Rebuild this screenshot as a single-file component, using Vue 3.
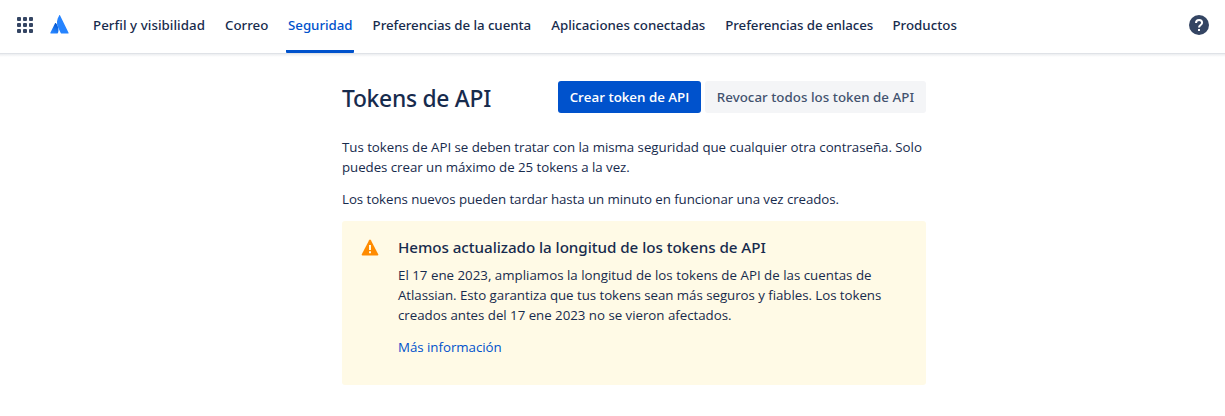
<script setup>
const tabs = ['Perfil y visibilidad', 'Correo', 'Seguridad', 'Preferencias de la cuenta', 'Aplicaciones conectadas', 'Preferencias de enlaces', 'Productos']
const active = 'Seguridad'
</script>

<template>
  <div class="page">
    <header class="topbar">
      <svg class="apps" width="16" height="16" viewBox="0 0 16 16" fill="#344563">
        <template v-for="r in 3" :key="r">
          <rect v-for="c in 3" :key="c" :x="(c - 1) * 6" :y="(r - 1) * 6" width="4" height="4" rx="1" />
        </template>
      </svg>
      <svg class="logo" width="19" height="19" viewBox="0 0 19 19">
        <defs>
          <linearGradient id="leg" x1="8" y1="9" x2="3" y2="18" gradientUnits="userSpaceOnUse">
            <stop offset="0" stop-color="#0052cc" />
            <stop offset="0.92" stop-color="#2684ff" />
          </linearGradient>
        </defs>
        <path d="M6 8.2c-.3-.35-.75-.3-.95.1L.35 17.7c-.15.4.05.7.5.7h6.5c.2 0 .5-.1.6-.35 1.3-2.8.4-7.3-1.95-9.85z" fill="url(#leg)" />
        <path d="M9.2.4C6.6 4.4 6.4 8.6 7.9 12l2.8 6.05c.1.2.3.35.5.35h6.9c.45 0 .65-.35.45-.75L10.1.4c-.2-.4-.65-.4-.9 0z" fill="#2684ff" />
      </svg>
      <nav class="tabs">
        <a v-for="t in tabs" :key="t" class="tab" :class="{ active: t === active }">{{ t }}</a>
      </nav>
      <svg class="help" width="20" height="20" viewBox="0 0 20 20">
        <circle cx="10" cy="10" r="10" fill="#344563" />
        <path d="M7 7.9C7 6.1 8.3 5 10.1 5S13.1 6.2 13.1 7.8c0 2.2-3.1 2.2-3.1 4.7" fill="none" stroke="#fff" stroke-width="2" />
        <path d="M9 14h2v2H9z" fill="#fff" />
      </svg>
    </header>
    <div class="topshade"></div>

    <main class="content">
      <div class="head">
        <h1>Tokens de API</h1>
        <div class="actions">
          <button class="btn primary">Crear token de API</button>
          <button class="btn">Revocar todos los token de API</button>
        </div>
      </div>
      <p class="intro">
        <span class="i1">Tus tokens de API se deben tratar con la misma seguridad que cualquier otra contraseña. Solo</span>
        <span class="i2">puedes crear un máximo de 25 tokens a la vez.</span>
      </p>
      <p class="note">Los tokens nuevos pueden tardar hasta un minuto en funcionar una vez creados.</p>
      <section class="notice">
        <svg class="warn" width="18" height="18" viewBox="0 0 18 18">
          <path d="M8.1 1.2c.5-.9 1.3-.9 1.8 0l7.3 14c.4.8.1 1.4-.8 1.4H1.6c-.9 0-1.2-.6-.8-1.4z" fill="#ff8b00" />
          <path d="M8 6h2v5H8zM8 12.2h2v2H8z" fill="#fffae6" />
        </svg>
        <div class="body">
          <h2>Hemos actualizado la longitud de los tokens de API</h2>
          <p class="text">
            <span class="n1">El 17 ene 2023, ampliamos la longitud de los tokens de API de las cuentas de</span>
            <span class="n2">Atlassian. Esto garantiza que tus tokens sean más seguros y fiables. Los tokens</span>
            <span class="n3">creados antes del 17 ene 2023 no se vieron afectados.</span>
          </p>
          <a class="more">Más información</a>
        </div>
      </section>
    </main>
  </div>
</template>

<style>
body { margin: 0; background: #fff; }
</style>

<style scoped>
.page { height: 416px; overflow: hidden; box-sizing: border-box; font: 400 13.3px/20px "Segoe UI", "Open Sans", sans-serif; color: #172b4d; white-space: nowrap; }
.topbar { display: flex; height: 53px; padding: 0 16px 0 17px; }
.apps { margin-top: 17px; }
.logo { margin: 15px 0 0 17px; }
.tabs { display: flex; flex: 1; margin-left: 22px; font-family: "Noto Sans", sans-serif; font-weight: 500; }
.tab { box-sizing: border-box; padding: 15px 0 0 2px; height: 53px; flex: none; }
.tab:nth-child(1) { width: 132px; letter-spacing: .05px; }
.tab:nth-child(2) { width: 63px; }
.tab:nth-child(3) { width: 68px; margin-right: 16.6px; letter-spacing: -.03px; }
.tab:nth-child(4) { width: 178.7px; letter-spacing: -.06px; }
.tab:nth-child(5) { width: 174px; letter-spacing: -.03px; }
.tab:nth-child(6) { width: 167.2px; letter-spacing: -.07px; }
.tab.active { color: #0052cc; border-bottom: 3px solid #0052cc; border-radius: 1px; }
.help { margin-top: 15px; }
.topshade { height: 4px; background: linear-gradient(180deg, rgba(9, 30, 66, .13) 0, rgba(9, 30, 66, .13) 1px, rgba(9, 30, 66, .08) 1px, rgba(9, 30, 66, 0) 4px); }
.content { width: 584px; margin: 24px 0 0 342px; }
.head { display: flex; justify-content: space-between; height: 32px; }
h1 { margin: 2px 0 0; font: 500 22.8px/32px "Noto Sans", sans-serif; letter-spacing: -.26px; }
.actions { display: flex; gap: 4px; }
.btn { height: 32px; width: 221px; padding: 0; border: 0; border-radius: 3px; background: #f4f5f7; color: #42526e; font: 500 13.3px/32px "Noto Sans", sans-serif; letter-spacing: .04px; }
.btn.primary { width: 143px; background: #0052cc; color: #fff; font-family: "Open Sans", sans-serif; font-weight: 600; letter-spacing: 0; }
.intro { margin: 24px 0 0; }
.intro span, .text span { display: block; }
.i1 { letter-spacing: -.03px; }
.i2 { letter-spacing: -.05px; }
.note { margin: 12px 0; letter-spacing: -.065px; }
.notice { display: flex; box-sizing: border-box; height: 164px; padding: 16px 16px 16px 19px; border-radius: 3px; background: #fffae6; }
.warn { margin-top: 2px; flex: none; }
.body { margin-left: 19px; }
h2 { margin: 0; font: 500 15.2px/20px "Noto Sans", sans-serif; letter-spacing: -.055px; }
.text { margin: 8px 0 12px; }
.n1 { letter-spacing: .01px; }
.n2 { letter-spacing: -.045px; }
.n3 { letter-spacing: -.025px; }
.more { color: #0052cc; letter-spacing: -.03px; }
</style>
